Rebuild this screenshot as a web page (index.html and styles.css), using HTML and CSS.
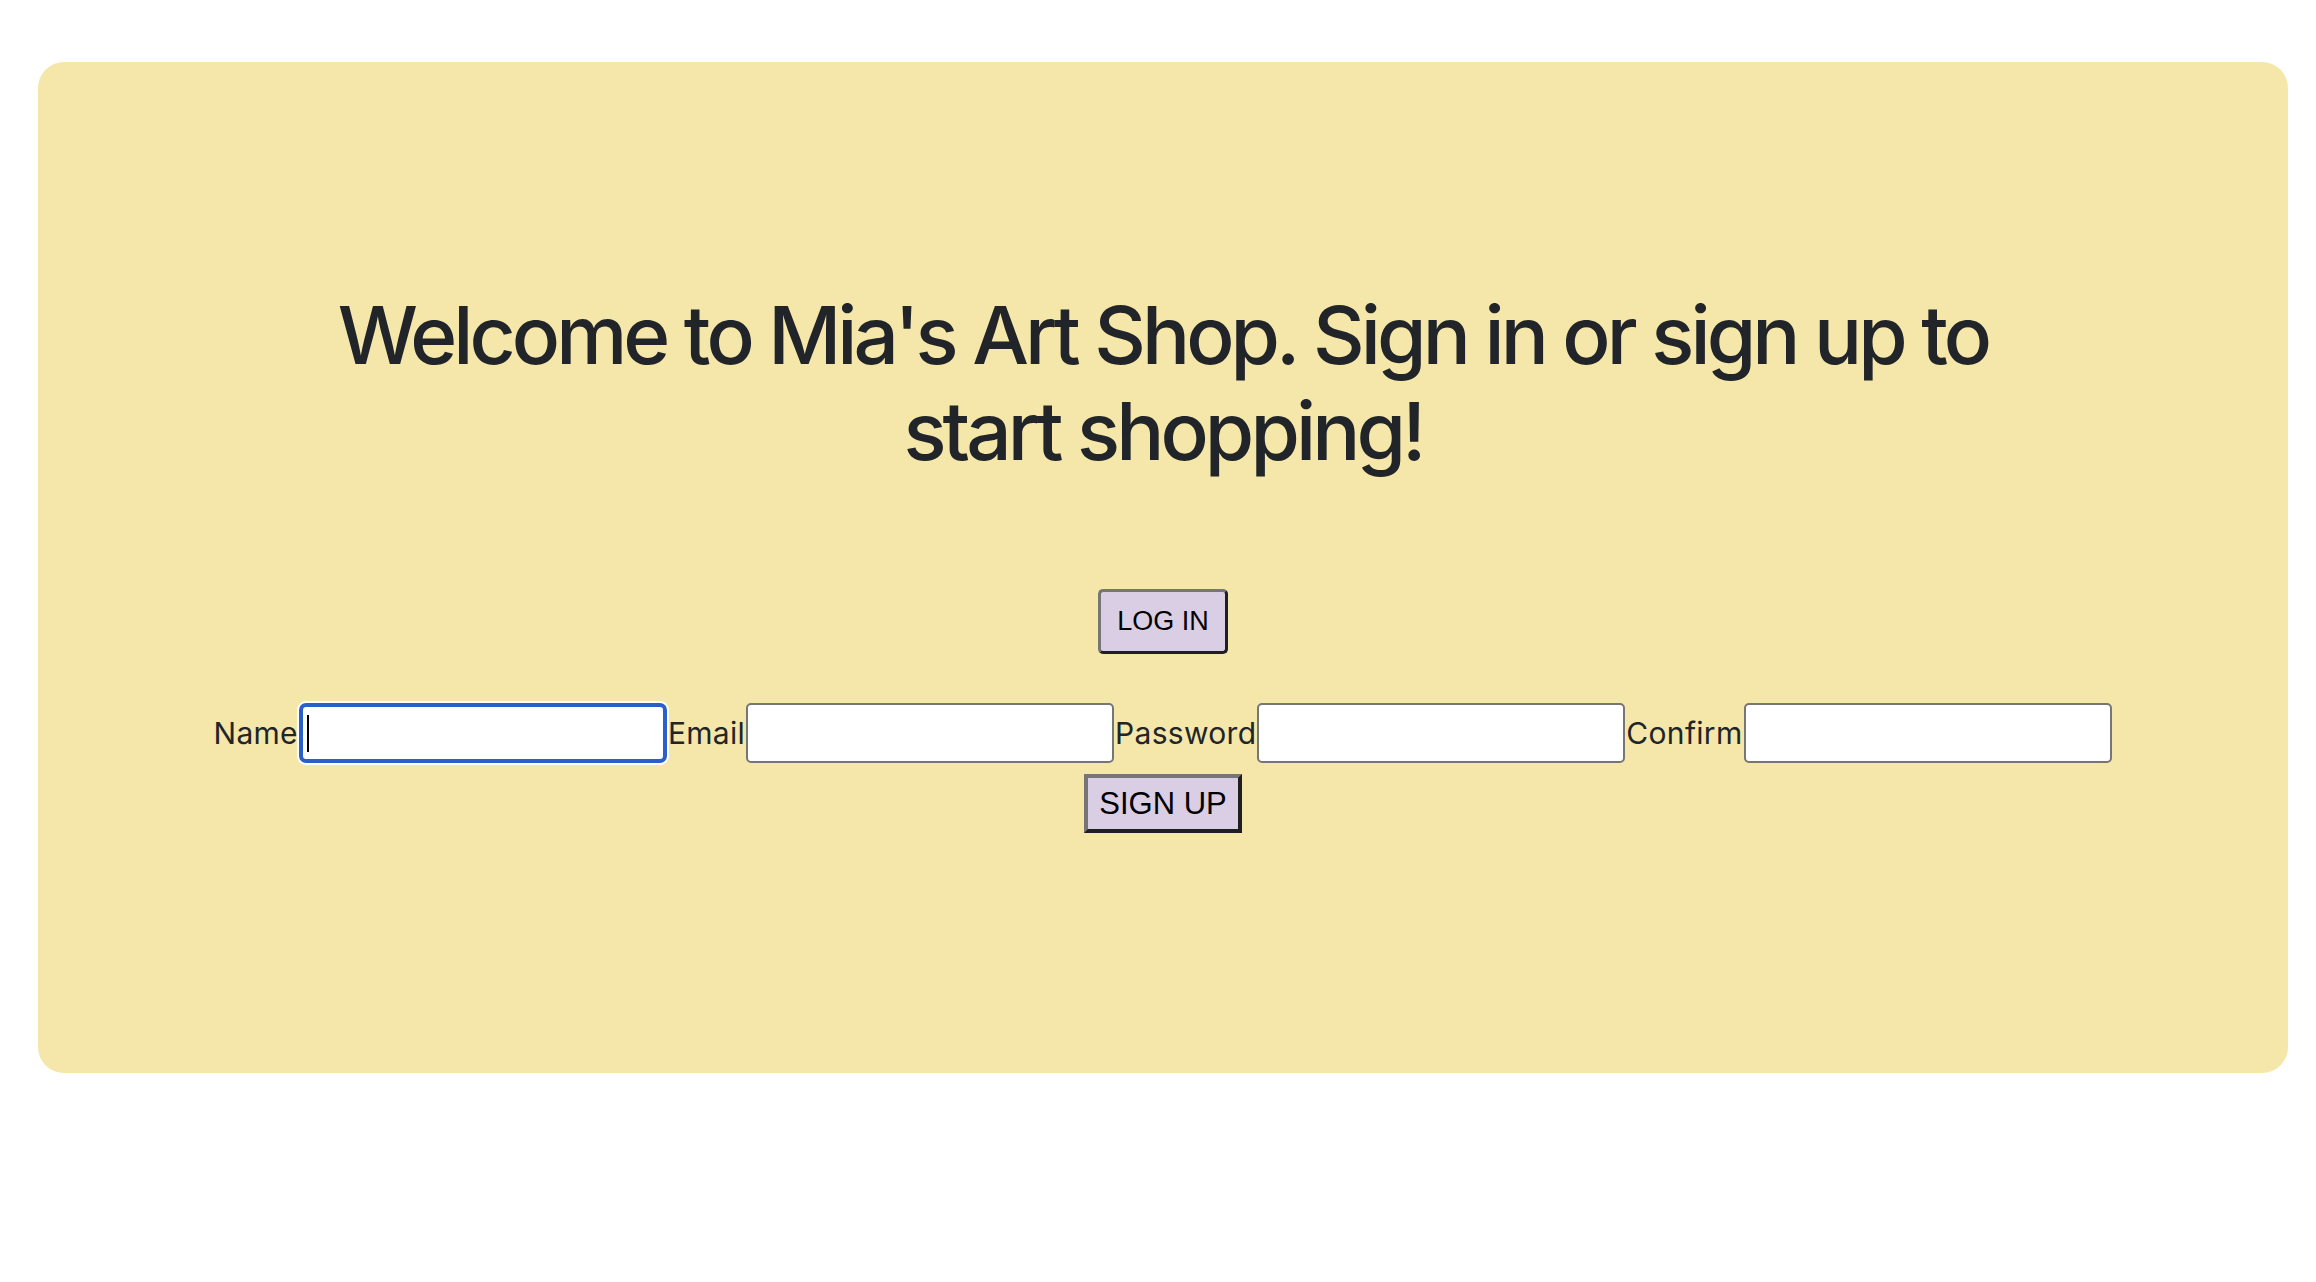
FILE: index.html
```html
<!DOCTYPE html>
<html lang="en">
<head>
<meta charset="utf-8">
<title>Mia's Art Shop</title>
<link rel="stylesheet" href="styles.css">
</head>
<body>
<div class="page">
  <main class="card">
    <h1 class="title">Welcome to Mia's Art Shop. Sign in or sign up to start shopping!</h1>
    <button class="login-btn" type="button">LOG IN</button>
    <form class="signup">
      <div class="fields">
        <label class="lbl" for="name">Name</label><input class="field field-focus" id="name" type="text"><label class="lbl" for="email">Email</label><input class="field" id="email" type="text"><label class="lbl" for="pw">Password</label><input class="field" id="pw" type="password"><label class="lbl" for="confirm">Confirm</label><input class="field" id="confirm" type="password">
      </div>
      <button class="signup-btn" type="button">SIGN UP</button>
    </form>
  </main>
</div>
</body>
</html>
```
FILE: styles.css
```css
html, body {
  margin: 0;
  padding: 0;
  background: #ffffff;
}

.page {
  padding: 62px 28px 0 38px;
}

.card {
  box-sizing: border-box;
  height: 1011px;
  background: #f5e7a9;
  border-radius: 26px;
  display: flex;
  flex-direction: column;
  align-items: center;
  padding-top: 225px;
}

.title {
  margin: 0;
  max-width: 1720px;
  text-align: center;
  font-family: Inter, "Noto Sans", sans-serif;
  font-weight: 500;
  font-size: 80px;
  line-height: 96px;
  letter-spacing: -3.9px;
  color: #212529;
}

.login-btn {
  margin-top: 110px;
  box-sizing: border-box;
  width: 130px;
  height: 65px;
  padding: 0;
  background: #dacee5;
  border-style: solid;
  border-width: 3px;
  border-color: #767676 #1f1f22 #1f1f22 #767676;
  border-radius: 5px;
  font-family: "Liberation Sans", Arial, sans-serif;
  font-size: 27px;
  color: #000;
}

.signup {
  margin-top: 49px;
  display: flex;
  flex-direction: column;
  align-items: center;
}

.fields {
  display: flex;
  align-items: center;
}

.lbl {
  font-family: Inter, "Noto Sans", sans-serif;
  font-size: 30px;
  letter-spacing: 0.3px;
  color: #212529;
  line-height: 60px;
}

.field {
  box-sizing: border-box;
  width: 368px;
  height: 60px;
  margin: 0 1px;
  border: 2px solid #767676;
  border-radius: 5px;
  background: #ffffff;
  padding: 0 6px;
}

.field-focus {
  border: 4px solid #2b5fcb;
  border-radius: 7px;
  box-shadow: 0 0 0 2px #ffffff;
  background: linear-gradient(#000, #000) no-repeat 4px center / 2px 37px, #ffffff;
}

.signup-btn {
  margin-top: 11px;
  box-sizing: border-box;
  width: 158px;
  height: 59px;
  padding: 0;
  background: #dacee5;
  border-style: solid;
  border-width: 4px;
  border-color: #767676 #1f1f22 #1f1f22 #767676;
  border-radius: 0;
  font-family: "Liberation Sans", Arial, sans-serif;
  font-size: 31px;
  color: #000;
}
```
